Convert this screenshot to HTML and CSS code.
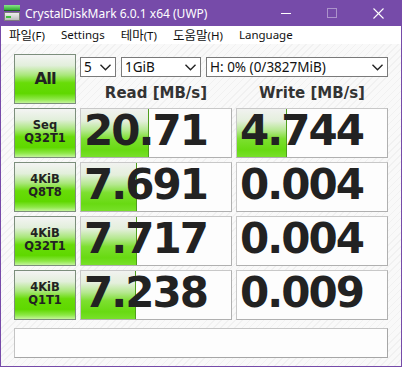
FILE: index.html
```html
<!DOCTYPE html>
<html lang="ko">

<head>
    <meta charset="UTF-8">
    <meta name="viewport" content="width=device-width, initial-scale=1.0">
    <title>CrystalDiskMark 6.0.1 x64 (UWP)</title>
    <link rel="stylesheet" href="styles.css">
</head>

<body>
    <div class="window">
        <div class="titlebar">
            <svg class="app-icon" width="16" height="16" viewBox="0 0 16 16">
                <defs>
                    <linearGradient id="lid" x1="0" y1="0" x2="0" y2="1">
                        <stop offset="0" stop-color="#8be68b" />
                        <stop offset="1" stop-color="#2fa82f" />
                    </linearGradient>
                    <linearGradient id="body" x1="0" y1="0" x2="0" y2="1">
                        <stop offset="0" stop-color="#f2f2f2" />
                        <stop offset="1" stop-color="#b8b8b8" />
                    </linearGradient>
                </defs>
                <rect x="0" y="0" width="16" height="5" fill="url(#lid)" />
                <rect x="0" y="5" width="16" height="1" fill="#1d5e1d" />
                <rect x="0.5" y="7.5" width="15" height="8" fill="url(#body)" stroke="#7d7d7d" />
                <rect x="2" y="11" width="5" height="2" fill="#3cbc3c" />
            </svg>
            <span class="title">CrystalDiskMark 6.0.1 x64 (UWP)</span>
            <div class="caption-buttons">
                <span class="cap-btn">
                    <svg width="10" height="10" viewBox="0 0 10 10">
                        <line x1="0" y1="5.5" x2="10" y2="5.5" stroke="#fff" stroke-width="1" />
                    </svg>
                </span>
                <span class="cap-btn">
                    <svg width="10" height="10" viewBox="0 0 10 10">
                        <rect x="0.5" y="0.5" width="9" height="9" fill="none" stroke="rgba(255,255,255,0.4)" stroke-width="1" />
                    </svg>
                </span>
                <span class="cap-btn">
                    <svg width="11" height="11" viewBox="0 0 11 11">
                        <line x1="0.5" y1="0.5" x2="10.5" y2="10.5" stroke="#fff" stroke-width="1.1" />
                        <line x1="10.5" y1="0.5" x2="0.5" y2="10.5" stroke="#fff" stroke-width="1.1" />
                    </svg>
                </span>
            </div>
        </div>

        <div class="menubar">
            <span class="menu-item"><span class="ko">파일</span>(F)</span>
            <span class="menu-item">Settings</span>
            <span class="menu-item"><span class="ko">테마</span>(T)</span>
            <span class="menu-item"><span class="ko">도움말</span>(H)</span>
            <span class="menu-item">Language</span>
        </div>

        <div class="content">
            <div class="grid">
                <div class="btn btn-all">All</div>
                <div class="top-controls">
                    <div class="selects">
                        <div class="select sel-count">
                            <span>5</span>
                            <svg class="chevron" width="11" height="7" viewBox="0 0 11 7">
                                <polyline points="0.5,0.8 5.5,5.8 10.5,0.8" fill="none" stroke="#222" stroke-width="1.4" />
                            </svg>
                        </div>
                        <div class="select sel-size">
                            <span>1GiB</span>
                            <svg class="chevron" width="11" height="7" viewBox="0 0 11 7">
                                <polyline points="0.5,0.8 5.5,5.8 10.5,0.8" fill="none" stroke="#222" stroke-width="1.4" />
                            </svg>
                        </div>
                        <div class="select sel-drive">
                            <span>H: 0% (0/3827MiB)</span>
                            <svg class="chevron" width="11" height="7" viewBox="0 0 11 7">
                                <polyline points="0.5,0.8 5.5,5.8 10.5,0.8" fill="none" stroke="#222" stroke-width="1.4" />
                            </svg>
                        </div>
                    </div>
                    <div class="headers">
                        <div class="col-head">Read [MB/s]</div>
                        <div class="col-head">Write [MB/s]</div>
                    </div>
                </div>

                <div class="btn">Seq<br>Q32T1</div>
                <div class="result"><div class="bar" style="width: 68px"></div><span class="value">20.71</span></div>
                <div class="result"><div class="bar" style="width: 50px"></div><span class="value">4.744</span></div>

                <div class="btn">4KiB<br>Q8T8</div>
                <div class="result"><div class="bar" style="width: 56px"></div><span class="value">7.691</span></div>
                <div class="result"><span class="value">0.004</span></div>

                <div class="btn">4KiB<br>Q32T1</div>
                <div class="result"><div class="bar" style="width: 56px"></div><span class="value">7.717</span></div>
                <div class="result"><span class="value">0.004</span></div>

                <div class="btn">4KiB<br>Q1T1</div>
                <div class="result"><div class="bar" style="width: 55px"></div><span class="value">7.238</span></div>
                <div class="result"><span class="value">0.009</span></div>
            </div>

            <div class="comment"></div>
        </div>
    </div>
</body>

</html>
```

FILE: styles.css
```css
html,
body {
    margin: 0;
    padding: 0;
}

body {
    width: 402px;
    height: 367px;
    overflow: hidden;
    font-family: "Noto Sans", "Noto Sans CJK KR", sans-serif;
}

.window {
    width: 402px;
    height: 367px;
    box-sizing: border-box;
    border: 1px solid #764ba9;
    border-top: none;
    display: flex;
    flex-direction: column;
    background-color: #f8f8f8;
}

/* title bar */
.titlebar {
    height: 26px;
    flex: none;
    background-color: #764ba9;
    color: #fff;
    display: flex;
    align-items: center;
    padding-left: 3px;
}

.app-icon {
    flex: none;
}

.title {
    margin-left: 5px;
    font-size: 12px;
    white-space: nowrap;
}

.caption-buttons {
    margin-left: auto;
    display: flex;
    height: 100%;
}

.cap-btn {
    width: 46px;
    height: 100%;
    display: flex;
    align-items: center;
    justify-content: center;
}

/* menu */
.menubar {
    height: 18px;
    flex: none;
    background-color: #fff;
    display: flex;
    align-items: center;
    font-size: 11.5px;
    line-height: 16px;
    color: #111;
}

.menu-item {
    padding: 0 8px;
    white-space: nowrap;
}

.ko {
    font-family: "Noto Sans CJK KR", sans-serif;
    font-size: 12.5px;
}

/* main area */
.content {
    flex: 1;
    padding: 10px 13px 0 13px;
    background-color: #f8f8f8;
    background-image: repeating-linear-gradient(-45deg, #f9f9f9 0 4px, #f1f1f1 4px 5px);
}

.grid {
    display: grid;
    grid-template-columns: 62px 152px 152px;
    grid-template-rows: repeat(5, 50px);
    column-gap: 4px;
    row-gap: 4px;
}

.btn {
    box-sizing: border-box;
    border: 1px solid #7c8e7c;
    background: linear-gradient(#f4f4f4 0%, #e2efdb 22%, #a9e77a 42%, #68dc08 58%, #5fd800 80%, #8ee848 92%, #c4f49c 100%);
    display: flex;
    align-items: center;
    justify-content: center;
    text-align: center;
    font-family: "DejaVu Sans", sans-serif;
    font-weight: bold;
    font-size: 11.5px;
    line-height: 13.5px;
    padding-bottom: 2px;
    color: #222;
}

.btn-all {
    font-size: 16.5px;
    letter-spacing: -1px;
    padding-bottom: 0;
}

.top-controls {
    grid-column: 2 / 4;
    display: flex;
    flex-direction: column;
}

.selects {
    margin-top: 3px;
    display: flex;
    gap: 5px;
}

.select {
    box-sizing: border-box;
    height: 20px;
    border: 1px solid #7a7a7a;
    background-color: #fff;
    display: flex;
    align-items: center;
    padding: 0 4px 0 3px;
    font-size: 13.5px;
    color: #111;
    white-space: nowrap;
}

.chevron {
    margin-left: auto;
    flex: none;
}

.sel-count {
    width: 36px;
}

.sel-size {
    width: 80px;
}

.sel-drive {
    width: 182px;
}

.headers {
    display: grid;
    grid-template-columns: 152px 152px;
    column-gap: 4px;
}

.col-head {
    height: 27px;
    box-sizing: border-box;
    padding-top: 6px;
    line-height: 21px;
    text-align: center;
    font-family: "DejaVu Sans", sans-serif;
    font-weight: bold;
    font-size: 15px;
    color: #333;
    white-space: nowrap;
}

.result {
    position: relative;
    box-sizing: border-box;
    border: 1px solid #c8c8c8;
    border-right-color: #b0b0b0;
    border-bottom-color: #b0b0b0;
    background-color: #fdfdfd;
}

.bar {
    position: absolute;
    left: 0;
    top: 0;
    bottom: 0;
    box-sizing: border-box;
    border-right: 1px solid #4f9e1c;
    background: linear-gradient(#f1f2f0 0%, #e4efdc 25%, #b4e88e 45%, #7ddf30 62%, #68da12 85%, #78e02a 100%);
}

.value {
    position: relative;
    display: block;
    padding-left: 3px;
    font-family: "DejaVu Sans", sans-serif;
    font-weight: bold;
    font-size: 42px;
    letter-spacing: -2px;
    line-height: 44px;
    color: #222;
    white-space: nowrap;
}

.comment {
    margin-top: 8px;
    height: 30px;
    box-sizing: border-box;
    border: 1px solid #c4c4c4;
    border-right-color: #a6a6a6;
    border-bottom-color: #a6a6a6;
    background-color: #fdfdfd;
}
```
